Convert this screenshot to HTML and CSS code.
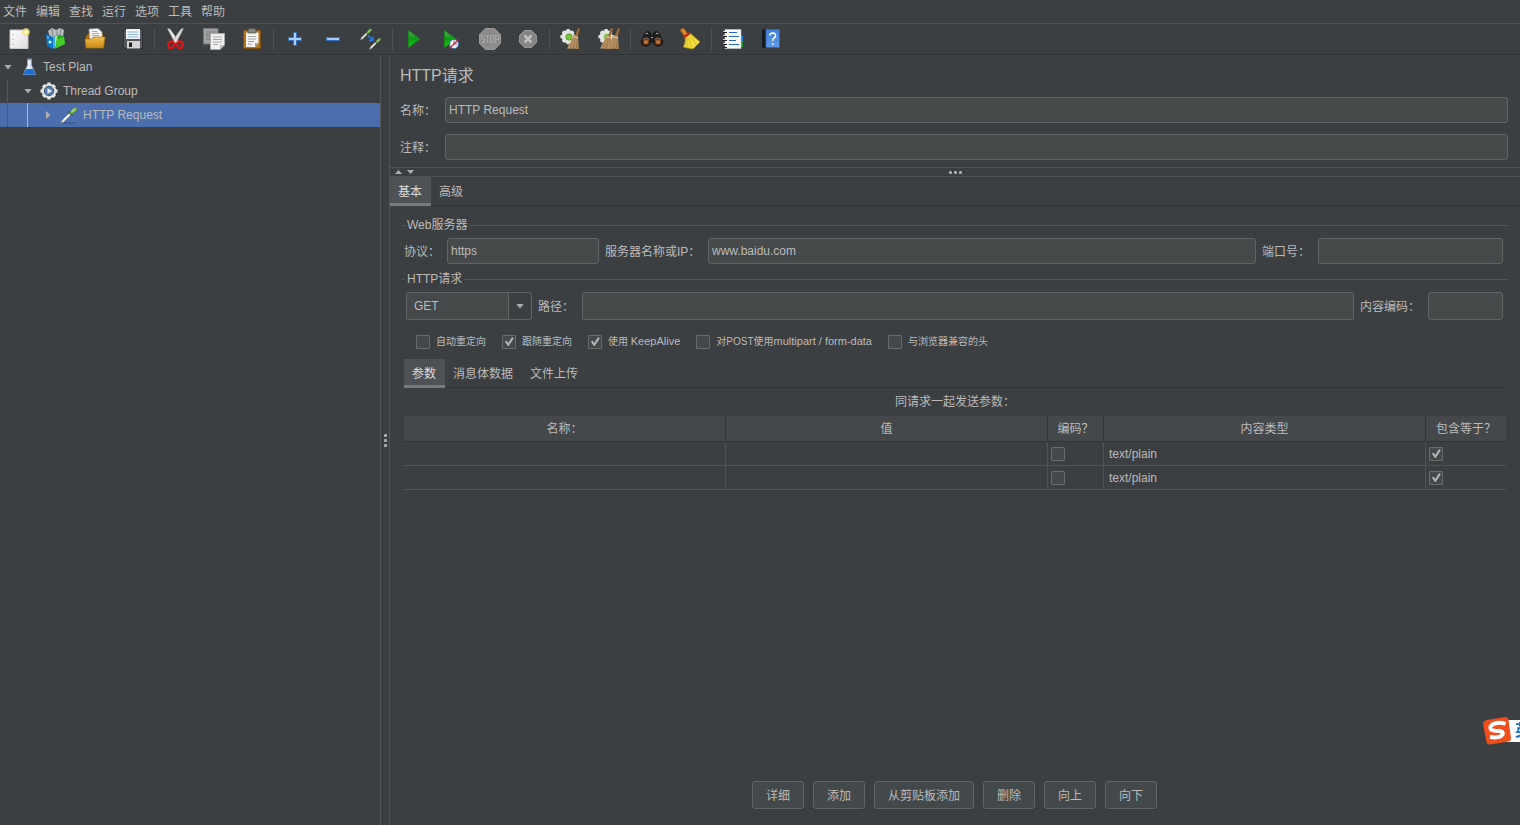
FILE: index.html
```html
<!DOCTYPE html>
<html lang="zh-CN">
<head>
<meta charset="utf-8">
<title>HTTP请求</title>
<link rel="stylesheet" href="styles.css">
</head>
<body>
<svg class="defs" aria-hidden="true">
  <defs>
    <linearGradient id="gPaper" x1="0" y1="0" x2="1" y2="1"><stop offset="0" stop-color="#fff"/><stop offset="1" stop-color="#dcdcdc"/></linearGradient>
    <linearGradient id="gFolder" x1="0" y1="0" x2="0" y2="1"><stop offset="0" stop-color="#f0bd4c"/><stop offset="1" stop-color="#c98a14"/></linearGradient>
    <linearGradient id="gGreen" x1="0" y1="0" x2="0" y2="1"><stop offset="0" stop-color="#5aa85e"/><stop offset="0.5" stop-color="#0a9a10"/><stop offset="1" stop-color="#14d414"/></linearGradient>
    <linearGradient id="gBlue" x1="0" y1="0" x2="0" y2="1"><stop offset="0" stop-color="#3d7fd8"/><stop offset="1" stop-color="#5f9be8"/></linearGradient>
    <linearGradient id="gBroom" x1="0" y1="0" x2="1" y2="1"><stop offset="0" stop-color="#cfab7c"/><stop offset="1" stop-color="#a37d4e"/></linearGradient>
    <g id="pipette">
      <path d="M0.500 17.500L2 14L9 7L11 9L4 16Z" fill="#dfe3df" stroke="#6e756c" stroke-width="0.700"/>
      <path d="M3 15L10 8" stroke="#fff" stroke-width="1"/>
      <path d="M8.500 5.500L12.500 9.500" stroke="#33502b" stroke-width="1.600"/>
      <path d="M9.500 6.500L13 2.500Q15 0.500 16.800 1.500Q18 3 16 5L11.800 8.500Z" fill="#76b254" stroke="#4b8036" stroke-width="0.600"/>
      <path d="M11.500 6L15 2.800" stroke="#b7df9b" stroke-width="1.200"/>
    </g>
    <g id="gear">
      <path d="M9 0.500V17.500M0.500 9H17.500M3.200 3.200L14.800 14.800M14.800 3.200L3.200 14.800" stroke="#e4e4e2" stroke-width="3.400"/>
      <circle cx="9" cy="9" r="7.300" fill="#e4e4e2"/>
    </g>
    <g id="broom">
      <path d="M11 0L13 0.500L10.500 9H7.500Z" fill="#9a6a38"/>
      <path d="M6 7L11 8L12 21L0 20.500Q4 14 6 7Z" fill="url(#gBroom)"/>
      <path d="M7 9L3 20M8.500 9L6 20.500M10 9L9.500 20.500" stroke="#8c6840" stroke-width="0.500" fill="none"/>
      <path d="M5.500 9L11 10" stroke="#e0c49a" stroke-width="0.900"/>
    </g>
  </defs>
</svg>

<div class="app">
  <nav class="menubar" aria-label="菜单">
    <button type="button">文件</button><button type="button">编辑</button><button type="button">查找</button><button type="button">运行</button><button type="button">选项</button><button type="button">工具</button><button type="button">帮助</button>
  </nav>

  <div class="toolbar" role="toolbar">
    <button type="button" aria-label="新建"><svg viewBox="0 0 24 24"><path d="M3 3H21V21.500H3Z" fill="url(#gPaper)" stroke="#c8c8c8"/><path d="M6 7v1M6 12v1M6 17v1" stroke="#999"/><circle cx="19" cy="5" r="3.800" fill="#f5ea7a" opacity="0.700"/><path d="M19 1v8M15 5h8" stroke="#ead93c"/><circle cx="19" cy="5" r="1.800" fill="#fffde0"/></svg></button>
    <button type="button" aria-label="模板"><svg viewBox="0 0 24 24"><path d="M3 4L7 1L11 3L15 1L19 3L18 10L5 10Z" fill="#b9bebe"/><path d="M7 2L8 9M12 3V9M16 2L15 9" stroke="#7c8484"/><path d="M1 7L8 10V22L2 19Z" fill="#0c78c8"/><path d="M8 10L12 8V19L8 22Z" fill="#3fa9e6"/><circle cx="5" cy="15" r="1.500" fill="#d8f0ff"/><path d="M3 9V12" stroke="#8cd0f8"/><path d="M10 10L13 8V19L10 22Z" fill="#a5e882"/><path d="M13 8L19 9L20 17L10 22L12 12Z" fill="#24a51e"/><path d="M12 12L19 10L20 17L11 21Z" fill="#46cc2b"/></svg></button>
    <button type="button" aria-label="打开"><svg viewBox="0 0 24 24"><path d="M3 9L5 7H20V20H3Z" fill="#a8710e"/><path d="M6 2L15 1.500L19 5V15H7Z" fill="#f4f4f4" stroke="#aaa" stroke-width="0.600"/><path d="M9 4.500H14M9 6.500H16M9 8.500H16M9 10.500H16" stroke="#999" stroke-width="0.800"/><path d="M2 12H9L11 10H22L20.500 21H3Z" fill="url(#gFolder)" stroke="#a8720f" stroke-width="0.700"/></svg></button>
    <button type="button" aria-label="保存"><svg viewBox="0 0 24 24"><path d="M2.500 2.500H21.500V21.500H4L2.500 20Z" fill="#53565a" stroke="#303236"/><path d="M5 2H19V12H5Z" fill="#f2f6fa"/><path d="M6.500 5H17.500M6.500 7.500H17.500M6.500 10H17.500" stroke="#8fb4d8"/><path d="M6 14H19V21.500H6Z" fill="#d4d4d2"/><path d="M8 15.500H11V20H8Z" fill="#202224"/></svg></button>
    <span class="sep"></span>
    <button type="button" aria-label="剪切"><svg viewBox="0 0 24 24"><path d="M3.500 1.500L6 2L14.500 14L11.500 17Z" fill="#eceeec" stroke="#9a9d9a" stroke-width="0.600"/><path d="M19.500 1.500L17 2L8.500 14L11.500 17Z" fill="#dcdfdc" stroke="#9a9d9a" stroke-width="0.600"/><path d="M10 14.500Q3.500 14 4.200 18Q5 22.500 8.500 20.500Q10 18.500 11 15.500M13.500 14.500Q19.500 14 18.800 18Q18 22.500 14.500 20.500Q13 18.500 12 15.500" fill="none" stroke="#d81414" stroke-width="2.500"/></svg></button>
    <button type="button" aria-label="复制"><svg viewBox="0 0 24 24"><path d="M1.500 1.500H16V17H1.500Z" fill="#a0a2a2" stroke="#777"/><path d="M4 5H13M4 7.500H13M4 10H10M4 12.500H8" stroke="#7d8080"/><path d="M8.500 6.500H22.500V18L18 22.500H8.500Z" fill="#f0f0ee" stroke="#aaa"/><path d="M11 10H20M11 12.500H20M11 15H20M11 17.500H16" stroke="#aaa"/><path d="M22 18L18 22V18Z" fill="#bbb"/></svg></button>
    <button type="button" aria-label="粘贴"><svg viewBox="0 0 24 24"><path d="M3.500 3.500H20.500V21.500H3.500Z" fill="#b5731c" stroke="#7f4e10"/><path d="M6 5.500H18.500V16L15 20H6Z" fill="#f4f4f2"/><path d="M8 9.500H16M8 12H16M8 14.500H14M8 17H12" stroke="#999" stroke-width="0.900"/><path d="M18.500 16L15 20V16Z" fill="#a4a4a4"/><path d="M8 2.500L10 1.500H14L16 2.500V6H8Z" fill="#83867c" stroke="#50524b" stroke-width="0.700"/></svg></button>
    <span class="sep"></span>
    <button type="button" aria-label="展开"><svg viewBox="0 0 24 24"><path d="M10.500 5.500H13.500V10.500H18.500V13.500H13.500V18.500H10.500V13.500H5.500V10.500H10.500Z" fill="#a5cdf5" stroke="#3272bd"/></svg></button>
    <button type="button" aria-label="折叠"><svg viewBox="0 0 24 24"><path d="M5.500 10.500H18.500V13.500H5.500Z" fill="#a5cdf5" stroke="#3272bd"/></svg></button>
    <button type="button" aria-label="切换"><svg viewBox="0 0 24 24"><use href="#pipette" transform="translate(1 1) scale(.68)"/><use href="#pipette" transform="translate(10 10.500) scale(.68)"/><path d="M9 8.500L13.500 13M14 9.500V13.500H10" stroke="#2878e8" stroke-width="1.500" fill="none"/></svg></button>
    <span class="sep"></span>
    <button type="button" aria-label="启动"><svg viewBox="0 0 24 24"><path d="M6.500 3.500L18 12L6.500 20.500Z" fill="url(#gGreen)" stroke="#178a1a" stroke-width="0.800"/></svg></button>
    <button type="button" aria-label="不停顿开始"><svg viewBox="0 0 24 24"><path d="M4.500 3.500L16 12L4.500 20.500Z" fill="url(#gGreen)" stroke="#178a1a" stroke-width="0.800"/><circle cx="14" cy="17" r="4.500" fill="#f4f7fb" stroke="#3b78b8" stroke-width="1.200"/><path d="M14 13.500V17H17" fill="none" stroke="#5a6a7a"/><path d="M9.500 21.500L18.500 12.500" stroke="#e02020" stroke-width="1.300"/></svg></button>
    <button type="button" aria-label="停止"><svg viewBox="0 0 24 24"><path d="M7.500 1.500H16.500L22.500 7.500V16.500L16.500 22.500H7.500L1.500 16.500V7.500Z" fill="#8b8b8b" stroke="#9b9b9b"/><path d="M6.500 8.500H3.500V12H6.500V15.500H3.500M7.500 8.500H11.500M9.500 8.500V15.500M12.500 8.500H15.500V15.500H12.500ZM17.500 16V8.500H20.500V12.500H17.500" fill="none" stroke="#a6a6a6" stroke-width="1.200"/></svg></button>
    <button type="button" aria-label="关闭"><svg viewBox="0 0 24 24"><path d="M8.500 3.500H15.500L20.500 8.500V15.500L15.500 20.500H8.500L3.500 15.500V8.500Z" fill="#858585" stroke="#979797"/><path d="M8.500 8.500L15.500 15.500M15.500 8.500L8.500 15.500" stroke="#bdbdbd" stroke-width="2.600"/></svg></button>
    <span class="sep"></span>
    <button type="button" aria-label="清除"><svg viewBox="0 0 24 24"><use href="#gear" transform="translate(1 1.500) scale(.9)"/><circle cx="10" cy="10" r="3.200" fill="#7cc43c" stroke="#4a8a20" stroke-width="0.700"/><use href="#broom" transform="translate(8 1)"/></svg></button>
    <button type="button" aria-label="清除全部"><svg viewBox="0 0 24 24"><use href="#gear" transform="translate(1 1.500) scale(.9)"/><circle cx="10" cy="10" r="3.200" fill="#7cc43c"/><use href="#broom" transform="translate(3 1)"/><use href="#broom" transform="translate(10 1)"/></svg></button>
    <span class="sep"></span>
    <button type="button" aria-label="查找"><svg viewBox="0 0 24 24"><path d="M3 11L5 6L8 4.500L10.500 6V9H13.500V6L16 4.500L19 6L21 11V15H3Z" fill="#202020" stroke="#101010"/><path d="M5.500 7L8 6M18.500 7L16 6M11 10.500H13" stroke="#aaa" stroke-width="1.200"/><circle cx="6" cy="14.500" r="4.300" fill="#6e3c1c" stroke="#111" stroke-width="1.500"/><circle cx="18" cy="14.500" r="4.300" fill="#6e3c1c" stroke="#111" stroke-width="1.500"/><circle cx="6" cy="15" r="2" fill="#c0783a"/><circle cx="18" cy="15" r="2" fill="#c0783a"/><path d="M2.500 12.500Q6 9 9.500 12.500M14.500 12.500Q18 9 21.500 12.500" fill="none" stroke="#898989" stroke-width="0.800"/></svg></button>
    <button type="button" aria-label="清除查找"><svg viewBox="0 0 24 24"><path d="M2 3L5.500 1L10 7L7 10Z" fill="#d68a27" stroke="#955914" stroke-width="0.700"/><path d="M7 9L12 6L22 15Q19 18 15 22Q8 21 5.500 20Q8 15 7 9Z" fill="#f2db3a" stroke="#a68b14" stroke-width="0.800"/><path d="M9 11L9 20M11 10.500L13 20.500M13 9.500L18 18" stroke="#cdb52a" stroke-width="0.800"/><path d="M6 10L12 6" stroke="#d01f1f" stroke-width="2.600"/></svg></button>
    <span class="sep"></span>
    <button type="button" aria-label="函数助手"><svg viewBox="0 0 24 24"><path d="M18 9H22V15H18Z" fill="#1879dc"/><path d="M18 15H22V20H18Z" fill="#169a22"/><path d="M4 2.500H20V21.500H4Z" fill="#fafafa" stroke="#ccc" stroke-width="0.600"/><path d="M8 5.500H16M8 9.500H18M8 13.500H15M8 17.500H18" stroke="#2668cf" stroke-width="1.200"/><path d="M2 5.500H6M2 9.500H6M2 13.500H6M2 17.500H6M2 20.500H6" stroke="#222" stroke-width="1.200"/><path d="M2 4.500H5M2 8.500H5M2 12.500H5M2 16.500H5" stroke="#eee" stroke-width="0.800"/></svg></button>
    <button type="button" aria-label="帮助"><svg viewBox="0 0 24 24"><path d="M3 3L6 2H20V21H4L3 20Z" fill="#141a22"/><path d="M7 2.500H20.500V20.500H7Z" fill="url(#gBlue)" stroke="#2f66b2"/><path d="M10.800 8.500Q11 6 13.800 6Q16.800 6.200 16.500 9Q16.200 10.500 14.500 11.500Q13.700 12.200 13.700 14M13.700 16V17.800" fill="none" stroke="#fff" stroke-width="1.500"/></svg></button>
  </div>

  <div class="workspace">
    <aside class="tree" role="tree">
      <div class="node" role="treeitem" aria-expanded="true">
        <span class="twisty"><span class="tri down"></span></span>
        <svg class="node-icon" viewBox="0 0 18 18"><path d="M7.500 1.500V7L3.500 16.500H15.500L11.500 7V1.500" fill="#d5e4f2" stroke="#8ba3b8" stroke-width="0.900"/><path d="M6 11H13L15.500 16.500H3.500Z" fill="#1c6fd8"/><path d="M9 2.500V8L7.500 11" stroke="#fff" fill="none"/><path d="M7 1H12" stroke="#8d9aa5"/></svg>
        <span>Test Plan</span>
      </div>
      <div class="node" role="treeitem" aria-expanded="true">
        <span class="indent"></span>
        <span class="twisty"><span class="tri down"></span></span>
        <svg class="node-icon" viewBox="0 0 18 18"><use href="#gear"/><circle cx="9" cy="9" r="4.700" fill="#5d7fae" stroke="#35527c"/><path d="M7.500 6.200L12 9L7.500 11.800Z" fill="#e8f0fa"/></svg>
        <span>Thread Group</span>
      </div>
      <div class="node selected" role="treeitem" aria-selected="true">
        <span class="indent"></span><span class="indent active"></span>
        <span class="twisty"><span class="tri right"></span></span>
        <svg class="node-icon" viewBox="0 0 18 18"><ellipse cx="8" cy="17" rx="7" ry="0.800" fill="#3c5583"/><use href="#pipette"/></svg>
        <span>HTTP Request</span>
      </div>
    </aside>

    <div class="divider-v"><span class="dots"><i></i><i></i><i></i></span></div>

    <main class="editor">
      <section class="head">
        <h1>HTTP请求</h1>
        <div class="head-row"><label for="name">名称：</label><input id="name" type="text" value="HTTP Request"></div>
        <div class="head-row"><label for="comment">注释：</label><input id="comment" type="text"></div>
      </section>

      <div class="divider-h"><span class="arrows"><span class="tri up small"></span><span class="tri down small"></span></span><span class="dots"><i></i><i></i><i></i></span></div>

      <div class="tabs" role="tablist">
        <button type="button" role="tab" class="on" aria-selected="true">基本</button><button type="button" role="tab">高级</button>
      </div>

      <div class="basic">
        <fieldset>
          <legend>Web服务器</legend>
          <div class="server-row">
            <label for="protocol">协议：</label><input id="protocol" type="text" value="https">
            <label for="host">服务器名称或IP：</label><input id="host" type="text" value="www.baidu.com">
            <label for="port">端口号：</label><input id="port" type="text">
          </div>
        </fieldset>
        <fieldset>
          <legend>HTTP请求</legend>
          <div class="path-row">
            <span class="combo"><select aria-label="方法"><option>GET</option><option>POST</option></select><span class="combo-arrow"><span class="tri down"></span></span></span>
            <label for="path">路径：</label><input id="path" type="text">
            <label for="encoding">内容编码：</label><input id="encoding" type="text">
          </div>
          <div class="checks">
            <label><input type="checkbox"><span>自动重定向</span></label>
            <label><input type="checkbox" checked><span>跟随重定向</span></label>
            <label><input type="checkbox" checked><span>使用 <span class="latin">KeepAlive</span></span></label>
            <label><input type="checkbox"><span>对POST使用<span class="latin">multipart / form-data</span></span></label>
            <label><input type="checkbox"><span>与浏览器兼容的头</span></label>
          </div>
        </fieldset>

        <div class="params">
          <div class="tabs" role="tablist">
            <button type="button" role="tab" class="on" aria-selected="true">参数</button><button type="button" role="tab">消息体数据</button><button type="button" role="tab">文件上传</button>
          </div>
          <table>
            <caption>同请求一起发送参数：</caption>
            <colgroup><col><col><col class="c-encode"><col><col class="c-equals"></colgroup>
            <thead><tr><th>名称：</th><th>值</th><th>编码？</th><th>内容类型</th><th>包含等于？</th></tr></thead>
            <tbody>
              <tr><td></td><td></td><td><input type="checkbox" aria-label="编码"></td><td>text/plain</td><td><input type="checkbox" aria-label="包含等于" checked></td></tr>
              <tr><td></td><td></td><td><input type="checkbox" aria-label="编码"></td><td>text/plain</td><td><input type="checkbox" aria-label="包含等于" checked></td></tr>
            </tbody>
          </table>
        </div>
      </div>

      <div class="actions">
        <button type="button">详细</button><button type="button">添加</button><button type="button">从剪贴板添加</button><button type="button">删除</button><button type="button">向上</button><button type="button">向下</button>
      </div>
    </main>
  </div>

  <div class="ime">
    <svg viewBox="0 0 30 30"><path d="M5 4L23 1Q26 1 26.500 3.500L29 22Q29 25 26.500 25.500L8 28.500Q5 28.500 4.500 26L1 8Q1 5 5 4Z" fill="#ee4f1c"/><path d="M23.500 8Q18 5.500 12 7.800Q6.500 10.500 9 13.500Q11 15 17 15Q22 15.500 20.500 18.500Q18 22.500 8 21" fill="none" stroke="#fff" stroke-width="4"/></svg>
    <span>英</span>
  </div>
</div>
</body>
</html>
```

FILE: styles.css
```css
* {
  box-sizing: border-box;
}

body {
  margin: 0;
  background: #3c3f41;
  color: #bbb;
  font: 12px/16px "Liberation Sans", "Noto Sans CJK SC", sans-serif;
}

button,
input,
select {
  margin: 0;
  color: inherit;
  font: inherit;
}

.defs {
  position: absolute;
  width: 0;
  height: 0;
}

.app {
  display: flex;
  flex-direction: column;
  min-height: 100vh;
  overflow: hidden;
}

/* Menu and toolbar */

.menubar {
  display: flex;
  gap: 9px;
  height: 24px;
  padding: 0 3px;
  border-bottom: 1px solid #515151;
}

.menubar button,
.toolbar button {
  padding: 0;
  border: 0;
  background: none;
}

.toolbar {
  display: flex;
  align-items: center;
  height: 31px;
  border-bottom: 1px solid #323537;
}

.toolbar button {
  display: grid;
  place-items: center;
  width: 38px;
  height: 30px;
}

.toolbar svg {
  width: 24px;
  height: 24px;
}

.sep {
  width: 1px;
  height: 21px;
  margin: 0 2px;
  background: #515456;
}

/* Tree */

.workspace {
  display: flex;
  flex: 1;
}

.tree {
  flex: 0 0 25%;
}

.node {
  display: flex;
  align-items: center;
  height: 24px;
}

.node.selected {
  background: #4b6eaf;
}

.indent {
  align-self: stretch;
  width: 20px;
  padding-left: 7px;
}

.indent::before {
  content: "";
  display: block;
  width: 1px;
  height: 100%;
  background: #55585a;
}

.indent.active::before {
  background: #8fc0f5;
}

.twisty {
  display: grid;
  place-items: center;
  width: 16px;
  margin-right: 4px;
}

.node-icon {
  width: 18px;
  height: 18px;
  margin-right: 5px;
}

.tri {
  width: 8px;
  height: 5px;
  background: #adadad;
  clip-path: polygon(0 0, 100% 0, 50% 100%);
}

.tri.up {
  clip-path: polygon(0 100%, 100% 100%, 50% 0);
}

.tri.right {
  width: 5px;
  height: 9px;
  clip-path: polygon(0 0, 100% 50%, 0 100%);
}

.tri.small {
  width: 7px;
  height: 4px;
}

/* Split dividers */

.divider-v {
  display: grid;
  place-items: center;
  width: 10px;
  border: solid #515456;
  border-width: 0 1px;
}

.divider-h {
  display: grid;
  grid-template-columns: 1fr auto 1fr;
  align-items: center;
  height: 10px;
  border: solid #515456;
  border-width: 1px 0;
}

.dots,
.arrows {
  display: flex;
  gap: 2px;
}

.divider-v .dots {
  flex-direction: column;
}

.dots i {
  width: 3px;
  height: 3px;
  border-radius: 1px;
  background: #adadad;
}

.arrows {
  gap: 5px;
  padding-left: 5px;
}

/* Editor */

.editor {
  display: flex;
  flex: 1;
  flex-direction: column;
  min-width: 0;
}

.head {
  display: grid;
  gap: 11px;
  padding: 11px 12px 7px 10px;
}

.head h1 {
  margin: 0;
  font-size: 16px;
  font-weight: 400;
  line-height: 20px;
}

.head-row {
  display: grid;
  grid-template-columns: 45px 1fr;
  align-items: center;
}

.head-row label,
.server-row label,
.path-row label {
  padding-top: 2px;
}

input[type="text"] {
  width: 100%;
  min-width: 0;
  height: 26px;
  padding: 0 3px;
  border: 1px solid #646464;
  border-radius: 3px;
  background: #45494a;
}

.tabs {
  display: flex;
  border-bottom: 1px solid #323537;
}

.tabs button {
  height: 29px;
  margin-bottom: -1px;
  padding: 3px 9px 0 8px;
  border: 0;
  border-bottom: 3px solid transparent;
  background: none;
}

.tabs .on {
  border-color: #747a80;
  background: #4e5254;
  color: #ddd;
}

.basic {
  padding: 11px 12px 0 14px;
}

fieldset {
  min-width: 0;
  margin: 0;
  padding: 5px 0 0;
  border: 0;
}

legend {
  display: flex;
  align-items: center;
  gap: 2px;
  width: 100%;
  margin-left: -2px;
  padding: 0;
}

legend::before,
legend::after {
  content: "";
  height: 1px;
  background: #55585a;
}

legend::before {
  width: 3px;
}

legend::after {
  flex: 1;
  margin-right: -2px;
}

.server-row,
.path-row {
  display: grid;
  align-items: center;
  padding: 0 5px 7px 0;
}

.server-row {
  grid-template-columns: 43px 152fr 109px 548fr 62px 185fr;
}

.server-row input + label,
.path-row label {
  padding-left: 6px;
}

.path-row {
  grid-template-columns: 126px 50px 1fr 74px 75px;
  padding-left: 2px;
}

.path-row input[type="text"] {
  height: 28px;
}

.combo {
  display: grid;
  grid-template-columns: 1fr 23px;
  height: 28px;
  border: 1px solid #646464;
  border-radius: 3px;
  background: #45494a;
}

.combo select {
  grid-area: 1 / 1 / 2 / 3;
  padding: 0 7px;
  border: 0;
  appearance: none;
  background: none;
}

.combo-arrow {
  display: grid;
  grid-area: 1 / 2;
  place-items: center;
  border-left: 1px solid #646464;
  border-radius: 0 3px 3px 0;
  background: #3c3f41;
  pointer-events: none;
}

.checks {
  display: flex;
  gap: 16px;
  padding: 6px 12px 9px;
  font-size: 10px;
}

.checks label {
  display: flex;
  align-items: center;
  gap: 6px;
}

.checks .latin {
  font-size: 11px;
}

input[type="checkbox"] {
  display: grid;
  flex: none;
  width: 14px;
  height: 14px;
  border: 1px solid #6b6b6b;
  border-radius: 1px;
  appearance: none;
  background: #43494a;
}

input[type="checkbox"]:checked::before {
  content: "";
  background: #b4b4b4;
  clip-path: polygon(16% 52%, 30% 42%, 43% 62%, 76% 12%, 90% 22%, 48% 88%, 40% 88%);
}

/* Parameter table */

.params {
  padding-right: 2px;
}

table {
  width: 100%;
  border-collapse: separate;
  border-spacing: 0;
  table-layout: fixed;
}

caption {
  padding: 6px 0;
}

.c-encode {
  width: 56px;
}

.c-equals {
  width: 80px;
}

th {
  height: 26px;
  padding: 0;
  border-right: 1px solid #323537;
  border-bottom: 1px solid #323537;
  background: #45484a;
  font-weight: 400;
}

td {
  height: 24px;
  padding: 0 5px;
  border-right: 1px solid #515456;
  border-bottom: 1px solid #515456;
}

td:has(input) {
  padding: 0 3px;
}

th:last-child,
td:last-child {
  border-right: 0;
}

.actions {
  display: flex;
  justify-content: center;
  gap: 9px;
  margin-top: auto;
  padding: 0 1px 16px 0;
}

.actions button {
  height: 28px;
  padding: 1px 13px 0;
  border: 1px solid #646464;
  border-radius: 3px;
  background: #43484a;
  box-shadow: 0 1px 0 #36393b;
}

/* Input method badge over the window edge */

.ime {
  position: fixed;
  right: -10px;
  bottom: 79px;
  display: flex;
  align-items: center;
  width: 48px;
  height: 30px;
}

.ime svg {
  z-index: 1;
  width: 30px;
  height: 30px;
}

.ime span {
  width: 24px;
  margin-left: -6px;
  padding-left: 9px;
  background: #fff;
  color: #1e73c8;
  font-size: 16px;
  font-weight: 700;
  line-height: 22px;
}
```
